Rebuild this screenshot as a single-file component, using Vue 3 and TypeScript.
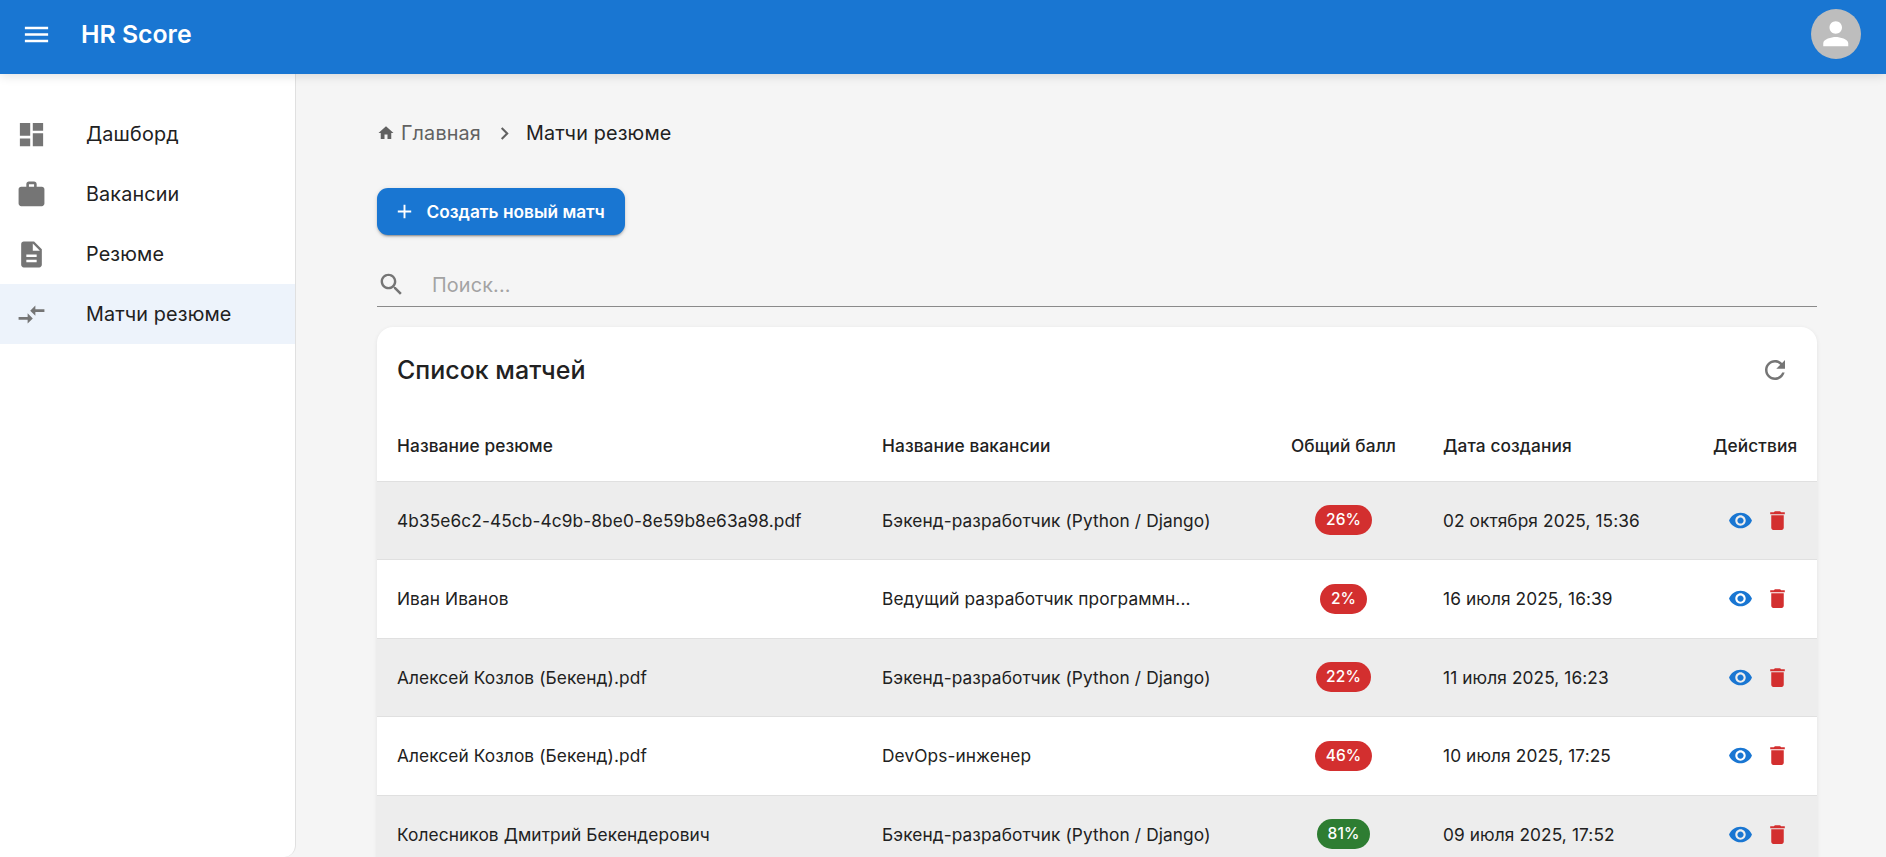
<script setup lang="ts">
interface Row { resume: string; vacancy: string; score: number; date: string }
const rows: Row[] = [
  { resume: '4b35e6c2-45cb-4c9b-8be0-8e59b8e63a98.pdf', vacancy: 'Бэкенд-разработчик (Python / Django)', score: 26, date: '02 октября 2025, 15:36' },
  { resume: 'Иван Иванов', vacancy: 'Ведущий разработчик программн...', score: 2, date: '16 июля 2025, 16:39' },
  { resume: 'Алексей Козлов (Бекенд).pdf', vacancy: 'Бэкенд-разработчик (Python / Django)', score: 22, date: '11 июля 2025, 16:23' },
  { resume: 'Алексей Козлов (Бекенд).pdf', vacancy: 'DevOps-инженер', score: 46, date: '10 июля 2025, 17:25' },
  { resume: 'Колесников Дмитрий Бекендерович', vacancy: 'Бэкенд-разработчик (Python / Django)', score: 81, date: '09 июля 2025, 17:52' },
]
const nav = [
  { label: 'Дашборд', icon: 'M3 13h8V3H3v10zm0 8h8v-6H3v6zm10 0h8V11h-8v10zm0-18v6h8V3h-8z' },
  { label: 'Вакансии', icon: 'M20 6h-4V4c0-1.11-.89-2-2-2h-4c-1.11 0-2 .89-2 2v2H4c-1.11 0-1.99.89-1.99 2L2 19c0 1.11.89 2 2 2h16c1.11 0 2-.89 2-2V8c0-1.11-.89-2-2-2zm-6 0h-4V4h4v2z' },
  { label: 'Резюме', icon: 'M14 2H6c-1.1 0-1.99.9-1.99 2L4 20c0 1.1.89 2 1.99 2H18c1.1 0 2-.9 2-2V8l-6-6zm2 16H8v-2h8v2zm0-4H8v-2h8v2zm-3-5V3.5L18.5 9H13z' },
  { label: 'Матчи резюме', icon: 'M9.01 14H2v2h7.01v3L13 15l-3.99-4v3zm5.98-1v-3H22V8h-7.01V5L11 9l3.99 4z', active: true },
]
</script>

<template>
  <div class="app">
    <header class="topbar">
      <svg class="menu-icon" viewBox="0 0 24 24"><path d="M3 18h18v-2H3v2zm0-5h18v-2H3v2zm0-7v2h18V6H3z" /></svg>
      <div class="brand">HR Score</div>
      <div class="avatar">
        <svg viewBox="0 0 24 24"><path d="M12 12c2.21 0 4-1.79 4-4s-1.79-4-4-4-4 1.79-4 4 1.79 4 4 4zm0 2c-2.67 0-8 1.34-8 4v2h16v-2c0-2.66-5.33-4-8-4z" /></svg>
      </div>
    </header>
    <div class="body">
      <aside class="sidebar">
        <div v-for="n in nav" :key="n.label" class="nav-item" :class="{ active: n.active }">
          <svg class="nav-icon" viewBox="0 0 24 24"><path :d="n.icon" /></svg>
          <span>{{ n.label }}</span>
        </div>
      </aside>
      <main class="main">
        <nav class="crumbs">
          <svg class="home" viewBox="0 0 24 24"><path d="M10 20v-6h4v6h5v-8h3L12 3 2 12h3v8z" /></svg>
          <span class="crumb-link">Главная</span>
          <svg class="sep" viewBox="0 0 24 24"><path d="M10 6L8.59 7.41 13.17 12l-4.58 4.59L10 18l6-6z" /></svg>
          <span class="crumb-current">Матчи резюме</span>
        </nav>
        <button class="create">
          <svg viewBox="0 0 24 24"><path d="M19 13h-6v6h-2v-6H5v-2h6V5h2v6h6v2z" /></svg>
          <span>Создать новый матч</span>
        </button>
        <div class="search">
          <svg viewBox="0 0 24 24"><path d="M15.5 14h-.79l-.28-.27C15.41 12.59 16 11.11 16 9.5 16 5.91 13.09 3 9.5 3S3 5.91 3 9.5 5.91 16 9.5 16c1.61 0 3.09-.59 4.23-1.57l.27.28v.79l5 4.99L20.49 19l-4.99-5zm-6 0C7.01 14 5 11.99 5 9.5S7.01 5 9.5 5 14 7.01 14 9.5 11.99 14 9.5 14z" /></svg>
          <input placeholder="Поиск..." />
        </div>
        <section class="card">
          <div class="card-head">
            <h2>Список матчей</h2>
            <svg class="refresh" viewBox="0 0 24 24"><path d="M17.65 6.35C16.2 4.9 14.21 4 12 4c-4.42 0-7.99 3.58-7.99 8s3.57 8 7.99 8c3.73 0 6.84-2.55 7.73-6h-2.08c-.82 2.33-3.04 4-5.65 4-3.31 0-6-2.69-6-6s2.69-6 6-6c1.66 0 3.14.69 4.22 1.78L13 11h7V4l-2.35 2.35z" /></svg>
          </div>
          <table>
            <colgroup>
              <col class="c1" /><col class="c2" /><col class="c3" /><col class="c4" /><col class="c5" />
            </colgroup>
            <thead>
              <tr>
                <th>Название резюме</th>
                <th>Название вакансии</th>
                <th class="center">Общий балл</th>
                <th>Дата создания</th>
                <th class="right">Действия</th>
              </tr>
            </thead>
            <tbody>
              <tr v-for="(r, i) in rows" :key="i" :class="{ shade: i % 2 === 0 }">
                <td>{{ r.resume }}</td>
                <td>{{ r.vacancy }}</td>
                <td class="center"><span class="chip" :class="r.score >= 70 ? 'good' : 'bad'">{{ r.score }}%</span></td>
                <td>{{ r.date }}</td>
                <td class="right">
                  <div class="actions">
                    <button class="icon-btn eye"><svg viewBox="0 0 24 24"><path d="M12 4.5C7 4.5 2.73 7.61 1 12c1.73 4.39 6 7.5 11 7.5s9.27-3.11 11-7.5c-1.73-4.39-6-7.5-11-7.5zM12 17c-2.76 0-5-2.24-5-5s2.24-5 5-5 5 2.24 5 5-2.24 5-5 5zm0-8c-1.66 0-3 1.34-3 3s1.34 3 3 3 3-1.34 3-3-1.34-3-3-3z" /></svg></button>
                    <button class="icon-btn trash"><svg viewBox="0 0 24 24"><path d="M6 19c0 1.1.9 2 2 2h8c1.1 0 2-.9 2-2V7H6v12zM19 4h-3.5l-1-1h-5l-1 1H5v2h14V4z" /></svg></button>
                  </div>
                </td>
              </tr>
            </tbody>
          </table>
        </section>
      </main>
    </div>
  </div>
</template>

<style>
html, body { margin: 0; overflow: hidden; }
</style>

<style scoped>
.app {
  height: 857px;
  display: flex;
  flex-direction: column;
  overflow: hidden;
  font-family: Inter, "Liberation Sans", sans-serif;
  color: #212121;
  background: #f5f5f5;
}
.topbar {
  flex: none;
  height: 74px;
  box-sizing: border-box;
  display: flex;
  align-items: center;
  background: #1976d2;
  color: #fff;
  padding: 0 25px 6px 20.5px;
  box-shadow: 0 2px 10px rgba(0,0,0,.12);
  position: relative;
  z-index: 2;
}
.menu-icon { width: 31px; height: 31px; fill: #fff; }
.brand { margin-left: 29.5px; font-size: 24.8px; font-weight: 600; flex: 1; }
.avatar {
  width: 50px; height: 50px; border-radius: 50%;
  background: #bdbdbd;
  display: flex; align-items: center; justify-content: center;
}
.avatar svg { width: 37.5px; height: 37.5px; fill: #fff; }
.body { flex: 1; display: flex; min-height: 0; }
.sidebar {
  flex: none;
  width: 296px;
  box-sizing: border-box;
  background: #fff;
  border-right: 1px solid #e0e0e0;
  border-bottom-right-radius: 12px;
  padding-top: 30px;
}
.nav-item {
  height: 60px;
  display: flex;
  align-items: center;
  padding-left: 15.5px;
  font-size: 19.8px;
  letter-spacing: .15px;
}
.nav-item.active { background: #edf3fb; }
.nav-icon { width: 31px; height: 31px; margin-right: 39.5px; fill: #757575; flex: none; }
.main {
  flex: 1;
  min-width: 0;
  box-sizing: border-box;
  padding: 39px 69px 0 81px;
}
.crumbs {
  height: 40px;
  display: flex;
  align-items: center;
  font-size: 19.8px;
  letter-spacing: .15px;
}
.home { width: 18px; height: 18px; fill: #616161; margin-right: 6px; }
.crumb-link { color: #616161; }
.sep { width: 25px; height: 25px; fill: #616161; margin: 0 9px 0 11px; }
.create {
  margin-top: 35px;
  width: 248px;
  height: 46.5px;
  display: flex;
  align-items: center;
  border: 0;
  border-radius: 11px;
  background: #1976d2;
  color: #fff;
  padding: 0 0 0 16px;
  font: 600 17.3px Inter, sans-serif;
  box-shadow: 0 3px 1px -2px rgba(0,0,0,.2), 0 2px 2px rgba(0,0,0,.14), 0 1px 5px rgba(0,0,0,.12);
}
.create svg { width: 23px; height: 23px; fill: #fff; margin-right: 10.5px; }
.search {
  margin-top: 29px;
  height: 43px;
  box-sizing: border-box;
  display: flex;
  align-items: center;
  border-bottom: 1px solid #8a8a8a;
}
.search svg { width: 29px; height: 29px; fill: #757575; margin-right: 26px; flex: none; }
.search input {
  flex: 1;
  border: 0;
  outline: 0;
  background: transparent;
  font: 400 19.8px Inter, sans-serif;
  letter-spacing: .15px;
  color: #212121;
  padding: 1px 0 0;
}
.search input::placeholder { color: #a3a3a3; opacity: 1; }
.card {
  margin-top: 20px;
  background: #fff;
  border-radius: 16px 16px 0 0;
  box-shadow: 0 1px 4px rgba(0,0,0,.08);
  overflow: hidden;
}
.card-head {
  height: 86px;
  display: flex;
  align-items: center;
  justify-content: space-between;
  padding: 0 20px;
}
.card-head h2 { margin: 0; font-size: 25px; font-weight: 500; }
.refresh { width: 30px; height: 30px; fill: #757575; margin-right: 7px; }
table { width: 100%; table-layout: fixed; border-collapse: separate; border-spacing: 0; font-size: 17.3px; letter-spacing: .1px; }
.c1 { width: 485px; }
.c2 { width: 402px; }
.c3 { width: 159px; }
.c4 { width: 270px; }
th {
  height: 69px;
  box-sizing: border-box;
  padding: 0 20px 2px;
  text-align: left;
  font-weight: 500;
  border-bottom: 1px solid #e0e0e0;
}
td {
  height: 78px;
  box-sizing: border-box;
  padding: 0 20px;
  border-bottom: 1px solid #e0e0e0;
  white-space: nowrap;
}
tbody tr:nth-child(even) td { height: 79px; }
.shade td { background: #ededed; }
.center { text-align: center; }
.right { text-align: right; }
.chip {
  display: inline-block;
  height: 30px;
  line-height: 30px;
  padding: 0 10.5px;
  border-radius: 15px;
  color: #fff;
  font-size: 15.5px;
  font-weight: 500;
}
.bad { background: #d32f2f; }
.good { background: #2e7d32; }
.actions { display: flex; justify-content: flex-end; margin-right: 1px; }
.icon-btn { width: 37px; height: 37px; border: 0; background: none; padding: 6px; display: block; }
.icon-btn svg { width: 25px; height: 25px; display: block; }
.eye svg { fill: #1976d2; }
.trash svg { fill: #d32f2f; }
</style>
